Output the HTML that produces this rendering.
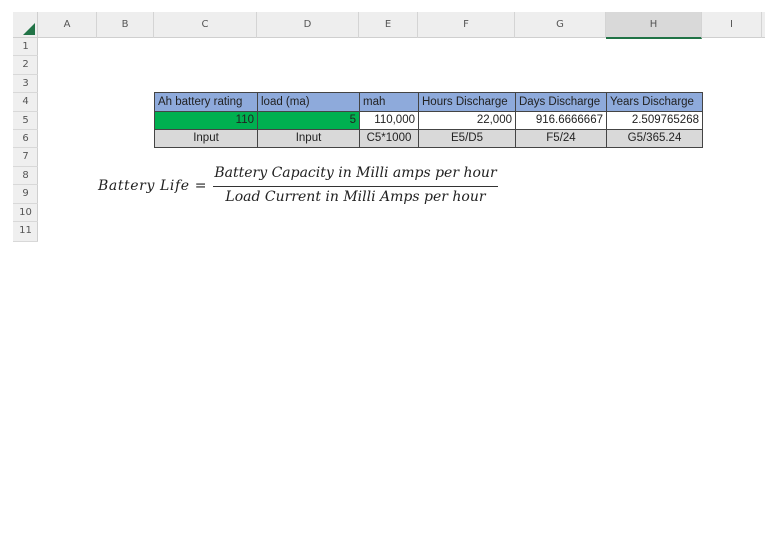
<!DOCTYPE html>
<html><head><style>
body{margin:0;width:768px;height:543px;background:#fff;position:relative;overflow:hidden;font-family:"DejaVu Sans","Liberation Sans",sans-serif}
.a{position:absolute;box-sizing:border-box}
.ch{font-size:10px;color:#555;text-align:center;line-height:26px;top:12px;height:26px;border-right:1px solid #d4d4d4}
.rh{left:13px;width:25px;font-size:10px;color:#555;text-align:center;border-bottom:1px solid #d8d8d8}
.c{font-family:"Liberation Sans",sans-serif;font-size:11.5px;line-height:18px;border:1px solid #444;padding:0 3px;white-space:nowrap;overflow:hidden;color:#222}
.f{font-family:"DejaVu Serif","Liberation Serif",serif;font-style:italic;font-size:14px;color:#222;white-space:nowrap}
</style></head><body>
<div class="a" style="left:13px;top:12px;width:752px;height:26px;background:#eeeeee;border-bottom:1px solid #cfcfcf"></div>
<div class="a" style="left:13px;top:38px;width:25px;height:204px;background:#efefef;border-right:1px solid #cfcfcf"></div>
<svg class="a" style="left:22px;top:22px" width="14" height="14"><polygon points="13,1 13,13 1,13" fill="#217346"/></svg>
<div class="a ch" style="left:13px;width:25px;border-right:1px solid #cfcfcf"></div>
<div class="a ch" style="left:38px;width:59px">A</div>
<div class="a ch" style="left:97px;width:57px">B</div>
<div class="a ch" style="left:154px;width:103px">C</div>
<div class="a ch" style="left:257px;width:102px">D</div>
<div class="a ch" style="left:359px;width:59px">E</div>
<div class="a ch" style="left:418px;width:97px">F</div>
<div class="a ch" style="left:515px;width:91px">G</div>
<div class="a ch" style="left:606px;width:96px;background:#d9d9d9;border-bottom:2px solid #217346;height:27px">H</div>
<div class="a ch" style="left:702px;width:60px">I</div>
<div class="a rh" style="top:38px;height:18.4px;line-height:18px">1</div>
<div class="a rh" style="top:56.4px;height:18.4px;line-height:18px">2</div>
<div class="a rh" style="top:74.8px;height:18.4px;line-height:18px">3</div>
<div class="a rh" style="top:93.2px;height:18.4px;line-height:18px">4</div>
<div class="a rh" style="top:111.6px;height:18.4px;line-height:18px">5</div>
<div class="a rh" style="top:130px;height:18.4px;line-height:18px">6</div>
<div class="a rh" style="top:148.4px;height:18.4px;line-height:18px">7</div>
<div class="a rh" style="top:166.8px;height:18.4px;line-height:18px">8</div>
<div class="a rh" style="top:185.2px;height:18.4px;line-height:18px">9</div>
<div class="a rh" style="top:203.6px;height:18.4px;line-height:18px">10</div>
<div class="a rh" style="top:222px;height:20px;line-height:18px">11</div>

<div class="a c" style="left:154px;top:92px;width:104px;height:20px;background:#8eaadb">Ah battery rating</div>
<div class="a c" style="left:257px;top:92px;width:103px;height:20px;background:#8eaadb">load (ma)</div>
<div class="a c" style="left:359px;top:92px;width:60px;height:20px;background:#8eaadb">mah</div>
<div class="a c" style="left:418px;top:92px;width:98px;height:20px;background:#8eaadb">Hours Discharge</div>
<div class="a c" style="left:515px;top:92px;width:92px;height:20px;background:#8eaadb">Days Discharge</div>
<div class="a c" style="left:606px;top:92px;width:97px;height:20px;background:#8eaadb">Years Discharge</div>

<div class="a c" style="left:154px;top:111px;width:104px;height:19px;background:#00b050;text-align:right;line-height:17px">110</div>
<div class="a c" style="left:257px;top:111px;width:103px;height:19px;background:#00b050;text-align:right;line-height:17px">5</div>
<div class="a c" style="left:359px;top:111px;width:60px;height:19px;text-align:right;line-height:17px">110,000</div>
<div class="a c" style="left:418px;top:111px;width:98px;height:19px;text-align:right;line-height:17px">22,000</div>
<div class="a c" style="left:515px;top:111px;width:92px;height:19px;text-align:right;line-height:17px">916.6666667</div>
<div class="a c" style="left:606px;top:111px;width:97px;height:19px;text-align:right;line-height:17px">2.509765268</div>

<div class="a c" style="left:154px;top:129px;width:104px;height:19px;background:#d9d9d9;text-align:center;line-height:17px">Input</div>
<div class="a c" style="left:257px;top:129px;width:103px;height:19px;background:#d9d9d9;text-align:center;line-height:17px">Input</div>
<div class="a c" style="left:359px;top:129px;width:60px;height:19px;background:#d9d9d9;text-align:center;line-height:17px">C5*1000</div>
<div class="a c" style="left:418px;top:129px;width:98px;height:19px;background:#d9d9d9;text-align:center;line-height:17px">E5/D5</div>
<div class="a c" style="left:515px;top:129px;width:92px;height:19px;background:#d9d9d9;text-align:center;line-height:17px">F5/24</div>
<div class="a c" style="left:606px;top:129px;width:97px;height:19px;background:#d9d9d9;text-align:center;line-height:17px">G5/365.24</div>

<div class="a f" style="left:98px;top:178px;letter-spacing:0.6px">Battery Life =</div>
<div class="a f" style="left:208px;top:165px;width:295px;text-align:center">Battery Capacity in Milli amps per hour</div>
<div class="a" style="left:213px;top:186px;width:285px;height:1px;background:#333"></div>
<div class="a f" style="left:208px;top:189px;width:295px;text-align:center">Load Current in Milli Amps per hour</div>
</body></html>
